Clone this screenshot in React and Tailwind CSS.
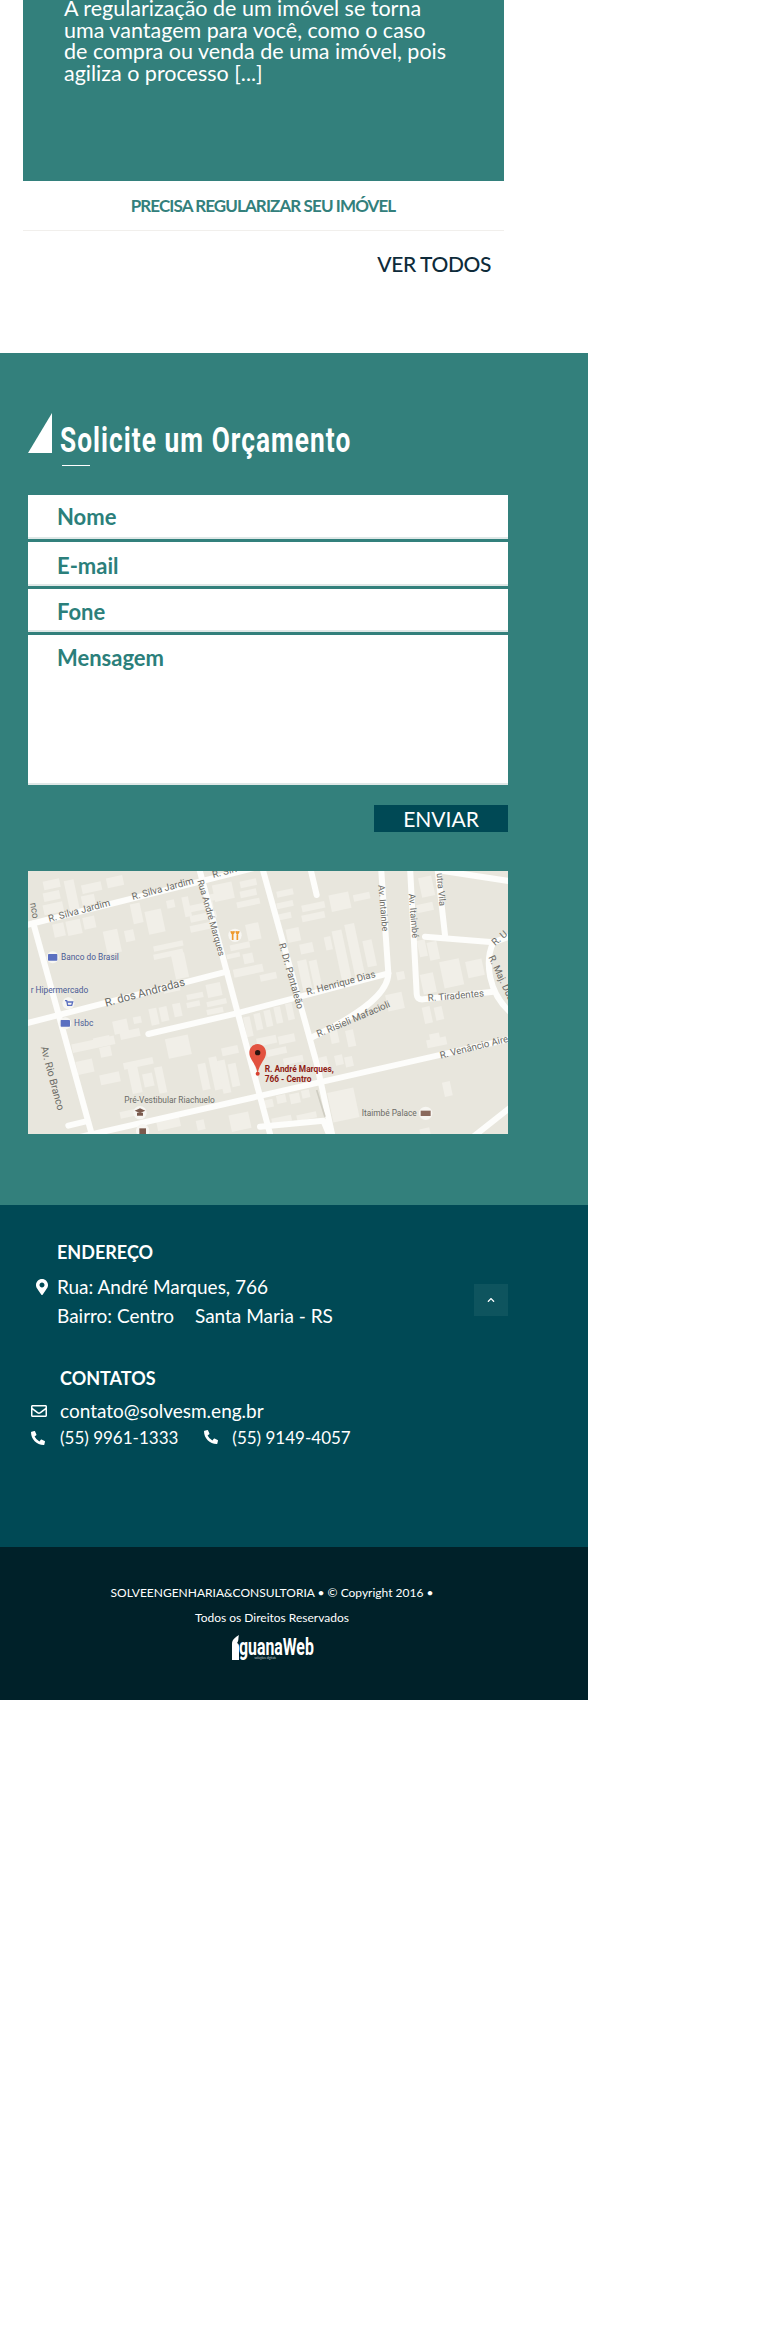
import React from "react";
import { FaMapMarkerAlt, FaPhoneAlt, FaRegEnvelope, FaChevronUp } from "react-icons/fa";

const blocks = [
  [130,60,50,26],[130,95,50,26],[130,130,60,30],[200,60,30,90],[245,70,60,26],[245,105,40,30],[320,50,50,30],[160,190,34,40],[200,180,44,44],[250,170,36,36],[315,210,44,70],[375,210,28,34],
  [395,130,30,60],[440,150,50,70],[500,120,24,24],[550,110,20,60],[460,250,90,16],[460,275,90,16],[520,280,40,75],[570,130,70,20],[570,160,80,20],[570,190,80,20],[620,100,50,20],
  [640,70,60,50],[720,60,50,20],[720,90,50,20],[710,120,70,18],[690,250,60,18],[680,280,40,14],[730,280,30,30],[700,320,90,24],[780,340,50,20],[740,190,40,50],
  [830,90,50,18],[830,125,50,18],[830,160,44,18],[860,205,40,40],[900,300,28,90],[935,300,24,90],[900,250,40,30],[905,130,70,20],[905,160,70,20],[990,100,60,50],[1060,100,50,20],[1010,210,30,150],[1050,190,30,170],[1095,240,28,80],[975,230,20,40],
  [1250,130,50,25],[1260,50,40,60],[1255,240,24,50],[1285,245,30,55],[1265,340,40,60],[1325,300,60,80],[1400,300,50,50],[1270,440,24,50],[1305,440,24,40],[1160,400,50,50],[1190,335,24,24],[1290,520,30,30],[1280,535,60,24],[1330,665,24,44],
  [735,470,20,60],[765,460,20,50],[795,450,20,50],[825,440,20,50],[860,430,20,50],[770,530,60,24],[835,525,50,24],[800,565,60,20],[850,590,60,20],[990,500,24,50],[1040,510,24,50],[960,590,24,40],[1005,585,24,30],[1035,590,24,30],
  [490,380,50,16],[560,400,50,16],[560,425,40,16],[620,370,44,40],[620,420,60,16],[620,445,50,16],[340,480,44,40],[400,470,24,20],[450,445,24,50],[480,440,24,44],[520,430,24,40],
  [215,540,130,26],[280,530,50,20],[360,510,60,24],[230,600,50,40],[300,560,34,30],[500,530,70,60],[370,600,90,20],[390,620,30,80],[430,640,30,40],[300,640,60,30],[470,620,24,80],[600,610,24,80],[635,590,24,100],[665,560,50,24],[660,600,24,100],[690,610,24,70],
  [360,750,60,20],[470,770,70,36],[690,760,60,50],[590,780,24,30],[780,720,40,24],[830,705,28,24],[870,700,30,30],[905,690,24,24],[815,770,60,18],[890,760,60,18],[990,690,80,90],[1260,805,30,20],
];

function MapArt() {
  const road = { fill: "none", stroke: "#fdfdfb", strokeLinecap: "round", strokeLinejoin: "round" };
  const label = { fontFamily: "Roboto, sans-serif", fill: "#6b6b66" };
  return (
    <svg viewBox="84 33 1440 789" className="block w-[480px] h-[263px]" style={{ background: "#e8e6dd" }}>
      {blocks.map(([x, y, w, h], i) => (
        <rect key={i} x={x} y={y} width={w} height={h} fill="#f1efe8" transform={`rotate(-12 ${x + w / 2} ${y + h / 2})`} />
      ))}
      <g {...road} strokeWidth="18">
        <path d="M60 200 L770 22" />
        <path d="M100 190 L280 840" />
        <path d="M596 20 L815 840" />
        <path d="M786 20 L950 610 L1000 840" />
        <path d="M930 20 L950 105" />
        <path d="M1143 20 L1165 340 C1165 390 1110 450 930 535" />
        <path d="M1230 20 L1250 400 Q1250 420 1270 418 L1480 395" />
        <path d="M1312 20 L1335 225" />
        <path d="M1275 230 L1480 247 L1540 225" />
        <path d="M1480 247 C1455 300 1460 400 1540 465" />
        <path d="M1330 33 L1540 65" />
        <path d="M60 495 L680 335" />
        <path d="M445 522 L710 460 L1165 340" />
        <path d="M200 840 L770 710 L1540 535" />
        <path d="M780 800 L970 782 L990 830" />
        <path d="M1420 830 L1540 735" />
        <path d="M205 797 L255 785" />
      </g>
      <path d="M950 690 L975 770" stroke="#cfcdc2" strokeWidth="5" fill="none" />
      <g {...label} fontSize="29">
        <text x="148" y="186" transform="rotate(-15 148 186)">R. Silva Jardim</text>
        <text x="398" y="120" transform="rotate(-15 398 120)">R. Silva Jardim</text>
        <text x="640" y="54" transform="rotate(-15 640 54)">R. Silva</text>
        <text x="592" y="62" transform="rotate(74 592 62)" fontSize="27">Rua André Marques</text>
        <text x="836" y="252" transform="rotate(74 836 252)">R. Dr. Pantaleão</text>
        <text x="1135" y="76" transform="rotate(85 1135 76)" fontSize="27">Av. Intainbe</text>
        <text x="1226" y="102" transform="rotate(85 1226 102)" fontSize="27">Av. Itaimbé</text>
        <text x="1310" y="40" transform="rotate(85 1310 40)" fontSize="27">utra Vila</text>
        <text x="318" y="440" transform="rotate(-15 318 440)" fontSize="34">R. dos Andradas</text>
        <text x="922" y="406" transform="rotate(-15 922 406)">R. Henrique Dias</text>
        <text x="955" y="532" transform="rotate(-23 955 532)">R. Risieli Mafacioli</text>
        <text x="1284" y="424" transform="rotate(-5 1284 424)">R. Tiradentes</text>
        <text x="1465" y="292" transform="rotate(65 1465 292)">R. Maj. Duarte</text>
        <text x="1485" y="258" transform="rotate(-40 1485 258)">R. U</text>
        <text x="1322" y="596" transform="rotate(-14 1322 596)">R. Venâncio Aire</text>
        <text x="122" y="562" transform="rotate(75 122 562)" fontSize="31">Av. Rio Branco</text>
        <text x="90" y="130" transform="rotate(80 90 130)">nco</text>
        <text x="183" y="299" fill="#4a5b95" fontSize="25">Banco do Brasil</text>
        <text x="92" y="398" fill="#4a5b95" fontSize="25">r Hipermercado</text>
        <text x="222" y="498" fill="#4a5b95" fontSize="25">Hsbc</text>
        <text x="373" y="728" fontSize="25">Pré-Vestibular Riachuelo</text>
        <text x="1085" y="767" fontSize="25">Itaimbé Palace</text>
      </g>
      <g>
        <circle cx="158" cy="292" r="18" fill="#f7f6f2" /><rect x="144" y="282" width="28" height="20" rx="2" fill="#5a6fc0" />
        <circle cx="205" cy="430" r="18" fill="#f7f6f2" /><path d="M195 422h5l3 14h12l3-10h-17" fill="none" stroke="#5a6fc0" strokeWidth="4" />
        <circle cx="196" cy="490" r="18" fill="#f7f6f2" /><rect x="182" y="480" width="28" height="20" rx="2" fill="#5a6fc0" />
        <circle cx="705" cy="226" r="20" fill="#f7f6f2" /><path d="M698 214v26M712 214v26M693 214q5 16 10 0M708 214q4 14 9 0" stroke="#ef9a2d" strokeWidth="5" fill="none" />
        <circle cx="420" cy="758" r="20" fill="#f7f6f2" /><path d="M404 752l16-7 16 7-16 7zM411 758v9h18v-9" fill="#7a5a4d" />
        <circle cx="428" cy="812" r="20" fill="#f7f6f2" /><rect x="418" y="805" width="20" height="17" fill="#7a5a4d" />
        <circle cx="1277" cy="760" r="20" fill="#f7f6f2" /><rect x="1262" y="752" width="30" height="16" fill="#8a6a5d" />
      </g>
      <path d="M773 552c-14 0-25 11-25 26 0 20 18 28 25 62 7-34 25-42 25-62 0-15-11-26-25-26z" fill="#e2523f" />
      <circle cx="773" cy="578" r="8" fill="#2a1410" />
      <circle cx="773" cy="641" r="6" fill="#d8402f" />
      <g fontFamily="Roboto, sans-serif" fontWeight="700" fontSize="25" fill="#8f1c14">
        <text x="794" y="635">R. André Marques,</text>
        <text x="794" y="665">766 - Centro</text>
      </g>
    </svg>
  );
}

function Field({ label, className }) {
  return (
    <div className={"bg-white pl-[29px] text-[22px] font-bold text-[#2b7f7b] border-b-2 border-[#dfe8e7] " + className}>{label}</div>
  );
}

export default function App() {
  return (
    <div className="w-[588px] font-[Lato,sans-serif] text-white">
      <div className="pl-[23px] pr-[84px]">
        <div className="h-[181px] bg-[#33807c] pl-[41px] overflow-hidden">
          <p className="text-[21.5px] leading-[21.5px] -mt-[2px] whitespace-nowrap">
            A regularização de um imóvel se torna<br />uma vantagem para você, como o caso<br />de compra ou venda de uma imóvel, pois<br />agiliza o processo [...]
          </p>
        </div>
        <div className="h-[50px] pr-[1px] border-b border-[#f1efec] flex items-center justify-center text-[17px] tracking-[-0.9px] font-bold text-[#33807c]">
          PRECISA REGULARIZAR SEU IMÓVEL
        </div>
        <div className="h-[122px] pt-[18px] pr-[13px] text-right text-[21px] tracking-[-0.4px] font-medium text-[#0e2b3a] leading-[30px]">VER TODOS</div>
      </div>

      <section className="h-[852px] bg-[#33807c] pl-[28px] pt-[60px] flex flex-col">
        <div className="flex items-end h-[40px]">
          <svg width="24" height="40" viewBox="0 0 24 40" className="shrink-0"><path d="M24 0V40H0z" fill="#fff" /></svg>
          <div className="relative ml-[8px] h-[40px] w-[300px]">
            <h2 className="absolute left-0 top-[6px] whitespace-nowrap origin-left scale-x-[0.75] text-[35px] leading-[44px] font-bold tracking-[1.4px] font-[Roboto,sans-serif]">Solicite um Orçamento</h2>
            <div className="absolute left-[2px] top-[52px] w-[28px] h-px bg-white" />
          </div>
        </div>
        <div className="mt-[42px] w-[480px] flex flex-col gap-[3px]">
          <Field label="Nome" className="h-[44px] leading-[44px]" />
          <Field label="E-mail" className="h-[44px] leading-[47px]" />
          <Field label="Fone" className="h-[43px] leading-[45px]" />
          <Field label="Mensagem" className="h-[150px] leading-[45px]" />
        </div>
        <div className="w-[480px] mt-[20px] flex justify-end">
          <div className="w-[134px] h-[27px] bg-[#004955] flex items-center justify-center text-[21px]">ENVIAR</div>
        </div>
        <div className="mt-[39px]"><MapArt /></div>
      </section>

      <section className="h-[342px] bg-[#004955] relative text-[19px]">
        <div className="pl-[57px] pt-[34px] text-[18px] font-bold leading-[26px]">ENDEREÇO</div>
        <div className="pl-[36px] mt-[7px] flex items-start gap-[9px] leading-[29px]">
          <FaMapMarkerAlt className="w-[12px] h-[16px] mt-[7px]" />
          <div>Rua: André Marques, 766<br />Bairro: Centro <span className="ml-[16px]">Santa Maria - RS</span></div>
        </div>
        <div className="pl-[60px] mt-[35px] text-[18px] font-bold leading-[26px]">CONTATOS</div>
        <div className="pl-[31px] mt-[6px] flex items-center gap-[13px] leading-[27px]">
          <FaRegEnvelope className="w-[16px] h-[16px]" />
          <span>contato@solvesm.eng.br</span>
        </div>
        <div className="pl-[31px] flex items-center leading-[28px] text-[17px]">
          <FaPhoneAlt className="w-[14px] h-[14px] mr-[15px]" />
          <span>(55) 9961-1333</span>
          <FaPhoneAlt className="w-[14px] h-[14px] ml-[26px] mr-[14px] -mt-[3px]" />
          <span>(55) 9149-4057</span>
        </div>
        <div className="absolute left-[474px] top-[79px] w-[34px] h-[32px] bg-[#0e545e] flex items-center justify-center">
          <FaChevronUp className="w-[10px] h-[8px]" />
        </div>
      </section>

      <footer className="h-[153px] bg-[#002129] text-center text-[12px] flex flex-col items-center pr-[44px]">
        <div className="mt-[36px] leading-[20px]">SOLVEENGENHARIA&amp;CONSULTORIA • © Copyright 2016 •</div>
        <div className="mt-[5px] leading-[20px]">Todos os Direitos Reservados</div>
        <div className="mt-[7px] -ml-[7px] h-[25px] w-[78px] relative">
          <svg width="11" height="25" viewBox="0 0 11 25" className="absolute left-0 top-0"><path d="M2 25V9C2 4 6 2 9 0 8 3 9 6 7 8c2 1 2 2 2 4v13z" fill="#fff" /></svg>
          <span className="absolute left-[9px] top-[2px] whitespace-nowrap origin-left scale-x-[0.66] text-[24px] leading-[20px] font-bold font-[Roboto,sans-serif]">guanaWeb</span>
          <span className="absolute left-[25px] top-[22px] whitespace-nowrap text-[3px] leading-[3px] opacity-70">soluções digitais</span>
        </div>
      </footer>
    </div>
  );
}
